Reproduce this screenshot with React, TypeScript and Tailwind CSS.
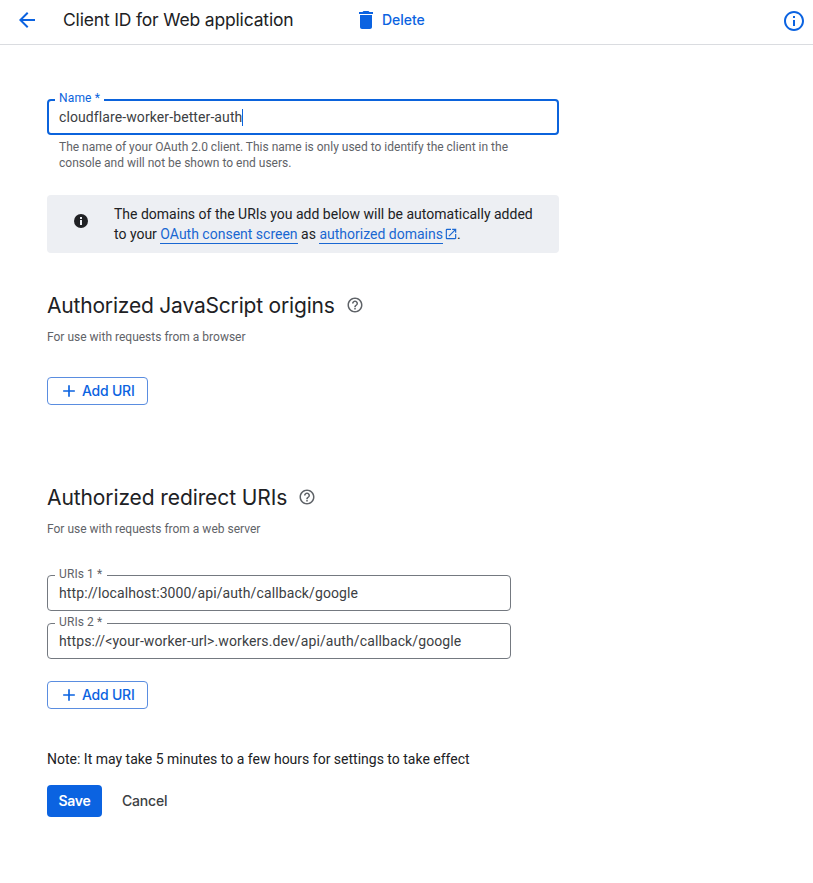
import type { ReactNode } from 'react';
import { MdAdd, MdArrowBack, MdDelete, MdHelpOutline, MdInfoOutline, MdOpenInNew } from 'react-icons/md';

function InfoFilled() {
  return (
    <svg viewBox="0 0 14 14" className="ml-px mt-[10px] size-[14px] shrink-0">
      <circle cx="7" cy="7" r="7" fill="#202124" />
      <path d="M6 3h2v2H6zM6 6h2v5H6z" fill="#edeff3" />
    </svg>
  );
}

function AddUri() {
  return (
    <button className="flex h-7 w-[101px] items-center rounded border border-[#5a8de0] pl-[11px] font-[Inter,sans-serif] text-[14px] font-medium text-[#0b63e1]">
      <MdAdd className="mr-[3px] size-5 shrink-0" />
      <span className="whitespace-nowrap pb-px tracking-[-0.22px]">Add URI</span>
    </button>
  );
}

function Field({ label, value, spacing }: { label: string; value: string; spacing: string }) {
  return (
    <fieldset className="h-9 w-[464px] rounded border border-[#747980] text-[#3c4043]">
      <legend className="ml-[7px] flex h-px w-[52px] items-center pl-1 text-[12px] text-[#5f6368]">
        <span className="relative -top-[2px] whitespace-nowrap tracking-[0.1px]">{label}</span>
      </legend>
      <div className={`pl-[11px] text-[14px] leading-[34px] ${spacing}`}>{value}</div>
    </fieldset>
  );
}

function Heading({ children, spacing }: { children: ReactNode; spacing: string }) {
  return (
    <div className="flex h-8 items-center">
      <h2 className={`whitespace-nowrap pt-[2px] font-[Inter,sans-serif] text-[21px] leading-8 text-[#202124] ${spacing}`}>{children}</h2>
      <MdHelpOutline className="ml-[11px] size-[18px] text-[#5f6368]" />
    </div>
  );
}

export default function App() {
  return (
    <div className="h-[883px] w-[813px] overflow-hidden bg-white font-[Roboto,sans-serif] text-[14px] text-[#202124]">
      <header className="flex h-[45px] items-center border-b border-[#dadce0] pb-1 pl-[15px] font-[Inter,sans-serif] text-[#0b63e1]">
        <MdArrowBack className="size-6" />
        <h1 className="ml-[24px] w-[291px] whitespace-nowrap pt-px text-[17.5px] tracking-[-0.17px] text-[#202124]">Client ID for Web application</h1>
        <MdDelete className="size-6" />
        <span className="ml-[4px] pb-px text-[14px] font-medium tracking-[-0.02px]">Delete</span>
        <MdInfoOutline className="ml-auto mr-[7px] mt-[2px] size-6" />
      </header>

      <main className="pl-[47px] pt-[54px]">
        <fieldset className="h-9 w-[512px] rounded border-2 border-[#0b63dc] text-[#3c4043]">
          <legend className="ml-[6px] flex h-[2px] w-[49px] items-center pl-1 text-[12px] text-[#0b63dc]">
            <span className="relative -top-[2px] whitespace-nowrap tracking-[0.15px]">Name *</span>
          </legend>
          <div className="flex h-8 items-center pl-[10px]">
            <span className="text-[14px] tracking-[0.1px]">cloudflare-worker-better-auth</span>
            <span className="h-[17px] w-px bg-[#0b63dc]" />
          </div>
        </fieldset>
        <p className="mt-1 pl-3 text-[12px] leading-4 text-[#5f6368]">
          The name of your OAuth 2.0 client. This name is only used to identify the client in the
          <br />
          console and will not be shown to end users.
        </p>

        <div className="mt-6 flex h-[58px] w-[512px] rounded bg-[#edeff3] pl-[26px] pt-[9px]">
          <InfoFilled />
          <p className="ml-[26px] whitespace-nowrap leading-5">
            The domains of the URIs you add below will be automatically added
            <br />
            to your <a className="border-b border-[#1967d2] pb-px text-[#1967d2]">OAuth consent screen</a> as{' '}
            <a className="border-b border-[#1967d2] pb-px text-[#1967d2]">authorized domains</a>
            <MdOpenInNew className="-mr-px ml-px inline size-[14px] align-[-2px] text-[#1967d2]" />.
          </p>
        </div>

        <section className="mt-9">
          <Heading spacing="tracking-[-0.19px]">Authorized JavaScript origins</Heading>
          <p className="mb-8 mt-2 text-[12px] leading-4 text-[#5f6368]">For use with requests from a browser</p>
          <AddUri />
        </section>

        <section className="mt-[76px]">
          <Heading spacing="tracking-[-0.1px]">Authorized redirect URIs</Heading>
          <p className="mb-[38px] mt-2 text-[12px] leading-4 text-[#5f6368]">For use with requests from a web server</p>
          <div className="mb-[22px] flex flex-col gap-3">
            <Field label="URIs 1 *" value="http://localhost:3000/api/auth/callback/google" spacing="tracking-[0.11px]" />
            <Field label="URIs 2 *" value="https://<your-worker-url>.workers.dev/api/auth/callback/google" spacing="tracking-[0.11px]" />
          </div>
          <AddUri />
        </section>

        <p className="mt-10 leading-5">Note: It may take 5 minutes to a few hours for settings to take effect</p>
        <div className="mt-4 flex h-8 items-center font-[Inter,sans-serif] font-medium">
          <button className="h-8 w-[55px] rounded bg-[#0b63e1] pb-[2px] font-semibold tracking-[-0.3px] text-white">Save</button>
          <button className="ml-5 pb-px tracking-[-0.18px] text-[#3c4043]">Cancel</button>
        </div>
      </main>
    </div>
  );
}
